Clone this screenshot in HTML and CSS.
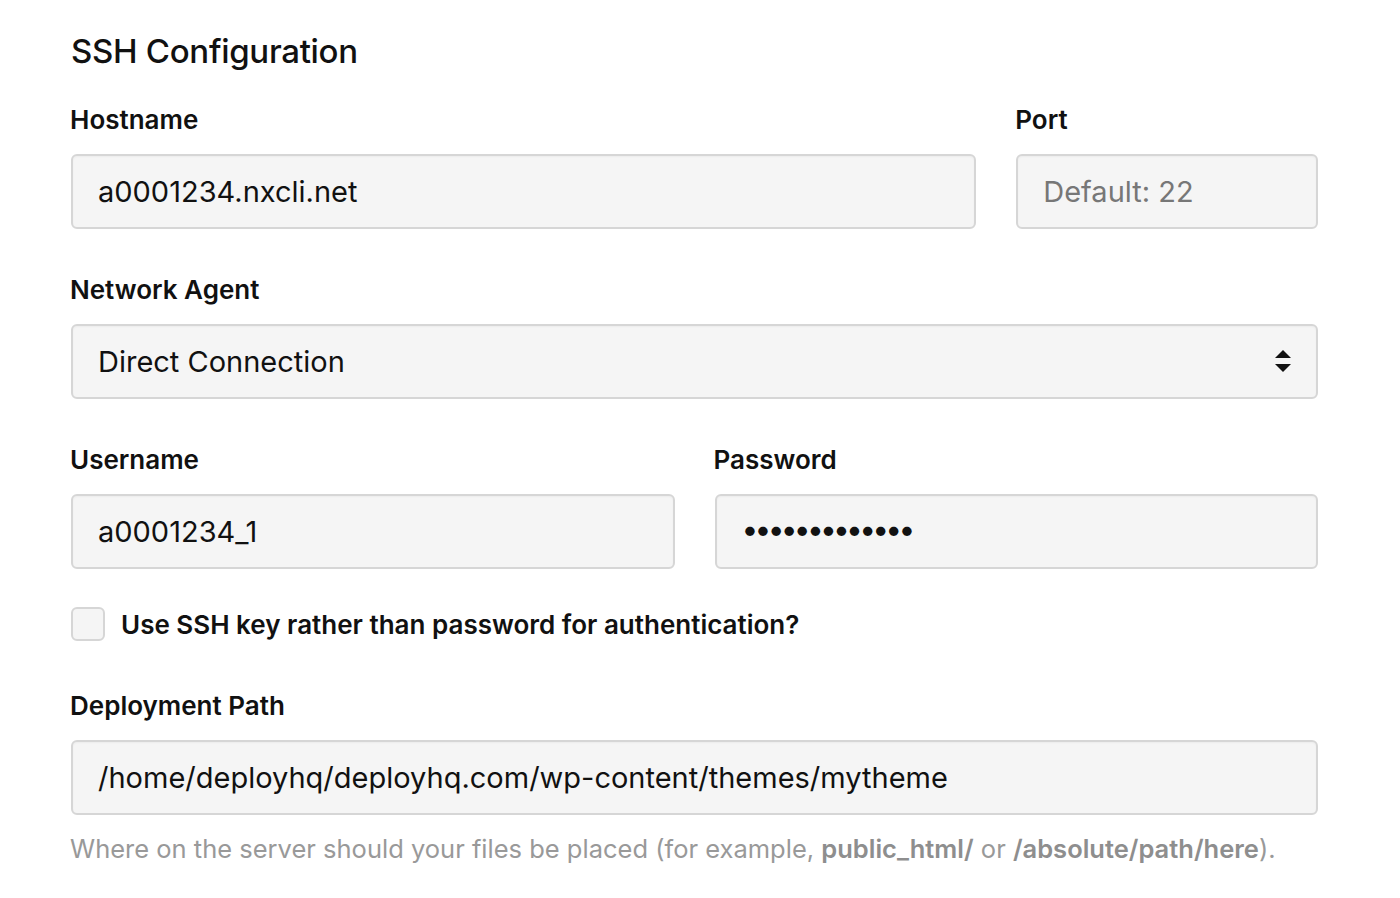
FILE: index.html
```html
<!DOCTYPE html>
<html lang="en">
<head>
<meta charset="utf-8">
<title>SSH Configuration</title>
<link rel="stylesheet" href="styles.css">
</head>
<body>
<form class="panel">
  <h2 class="title">SSH Configuration</h2>

  <div class="row row-host">
    <div class="field">
      <label class="label" for="host">Hostname</label>
      <input class="input" id="host" type="text" value="a0001234.nxcli.net">
    </div>
    <div class="field">
      <label class="label" for="port">Port</label>
      <input class="input" id="port" type="text" placeholder="Default: 22">
    </div>
  </div>

  <div class="field">
    <label class="label" for="agent">Network Agent</label>
    <div class="select-wrap">
      <select class="input select" id="agent">
        <option>Direct Connection</option>
      </select>
      <svg class="select-arrows" width="18" height="26" viewBox="0 0 18 26" aria-hidden="true">
        <path d="M9 2 L17 10 L1 10 Z" fill="#111"/>
        <path d="M1 16 L17 16 L9 24 Z" fill="#111"/>
      </svg>
    </div>
  </div>

  <div class="row row-half">
    <div class="field">
      <label class="label" for="user">Username</label>
      <input class="input" id="user" type="text" value="a0001234_1">
    </div>
    <div class="field">
      <label class="label" for="pass">Password</label>
      <input class="input password" id="pass" type="password" value="abcdefghijklm">
    </div>
  </div>

  <label class="check">
    <span class="check-box"></span>
    <span class="check-text">Use SSH key rather than password for authentication?</span>
  </label>

  <div class="field">
    <label class="label" for="path">Deployment Path</label>
    <input class="input" id="path" type="text" value="/home/deployhq/deployhq.com/wp-content/themes/mytheme">
    <p class="help">Where on the server should your files be placed (for example, <b>public_html/</b> or <b>/absolute/path/here</b>).</p>
  </div>
</form>
</body>
</html>
```

FILE: styles.css
```css
* { box-sizing: border-box; }

html, body {
  margin: 0;
  padding: 0;
  background: #ffffff;
}

body {
  font-family: "Inter", "Liberation Sans", sans-serif;
  color: #111111;
}

.panel {
  width: 1247px;
  margin-left: 71px;
  padding-top: 29px;
}

.title {
  margin: 0 0 32px 0;
  font-size: 33px;
  font-weight: 500;
  line-height: 44px;
  color: #111;
  letter-spacing: -0.3px;
}

.row {
  display: grid;
  column-gap: 40px;
}

.row-host { grid-template-columns: 3fr 1fr; }
.row-half { grid-template-columns: 1fr 1fr; }

.field {
  display: flex;
  flex-direction: column;
  margin-bottom: 46px;
}

.label {
  font-size: 26px;
  font-weight: 600;
  line-height: 30px;
  margin: 0 0 19px -1px;
  color: #111;
}

.input {
  width: 100%;
  height: 75px;
  border: 2px solid #d6d6d6;
  border-radius: 6px;
  background: #f5f5f5;
  padding: 0 25px;
  font-family: "Inter", "Liberation Sans", sans-serif;
  font-size: 29px;
  color: #111;
  outline: none;
  box-shadow: inset 0 1px 2px rgba(0,0,0,0.04);
}

.input::placeholder { color: #777; }

.password {
  font-size: 30px;
  letter-spacing: -3.8px;
  padding-left: 25px;
  padding-bottom: 5px;
}

.select-wrap {
  position: relative;
}

.select {
  appearance: none;
  -webkit-appearance: none;
}

.select-arrows {
  position: absolute;
  right: 26px;
  top: 24px;
  pointer-events: none;
}

.check {
  display: flex;
  align-items: center;
  gap: 16px;
  margin: -8px 0 50px 0;
}

.check-box {
  width: 34px;
  height: 34px;
  border: 2px solid #d6d6d6;
  border-radius: 6px;
  background: #f5f5f5;
  flex: none;
}

.check-text {
  font-size: 26px;
  font-weight: 600;
  color: #111;
}

.help {
  margin: 17px 0 0 -1px;
  font-size: 25.5px;
  line-height: 34px;
  color: #999;
}

.help b {
  font-weight: 600;
  color: #8e8e8e;
}
```
